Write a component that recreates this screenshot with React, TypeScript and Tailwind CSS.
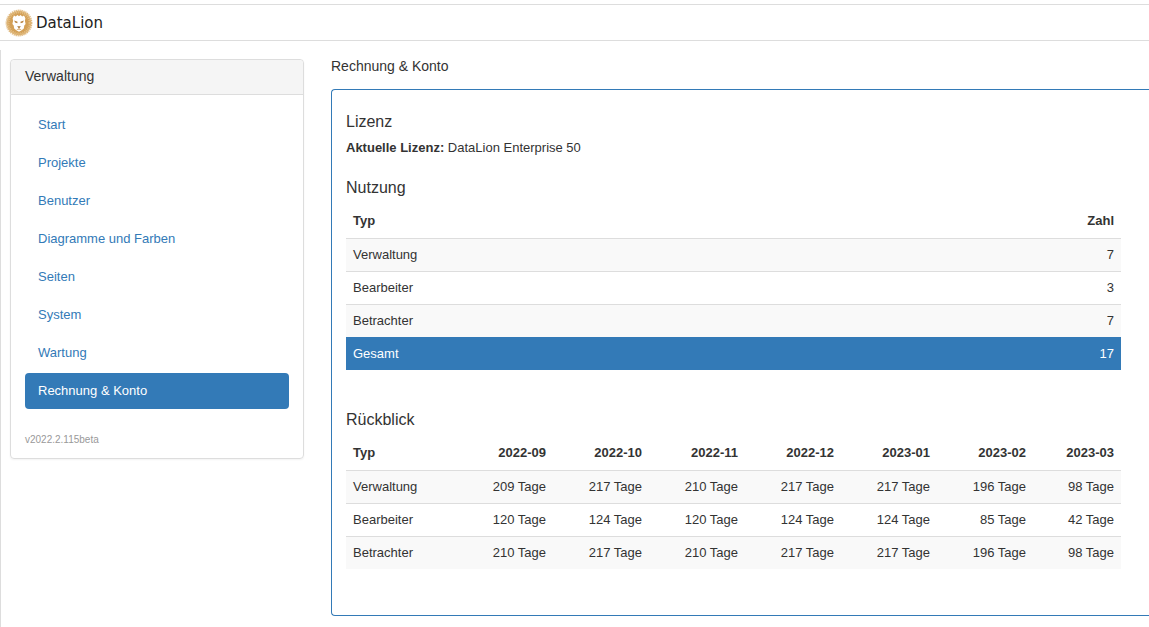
import clsx from 'clsx'

const NAV_ITEMS = [
  'Start',
  'Projekte',
  'Benutzer',
  'Diagramme und Farben',
  'Seiten',
  'System',
  'Wartung',
  'Rechnung & Konto',
]

const USAGE = [
  { type: 'Verwaltung', count: 7 },
  { type: 'Bearbeiter', count: 3 },
  { type: 'Betrachter', count: 7 },
]

const MONTHS = ['2022-09', '2022-10', '2022-11', '2022-12', '2023-01', '2023-02', '2023-03']

const HISTORY = [
  { type: 'Verwaltung', days: [209, 217, 210, 217, 217, 196, 98] },
  { type: 'Bearbeiter', days: [120, 124, 120, 124, 124, 85, 42] },
  { type: 'Betrachter', days: [210, 217, 210, 217, 217, 196, 98] },
]

const cell = 'px-[7px] py-[7px]'
const headCell = 'px-[7px] pt-[7px] pb-2'
const row = 'border-t border-[#ddd] odd:bg-[#f9f9f9]'

function LionLogo() {
  return (
    <svg viewBox="0 0 28 28" className="size-7" aria-hidden="true">
      <circle cx="14" cy="14" r="12.2" fill="#dcb06e" />
      <circle cx="14" cy="14" r="12.7" fill="none" stroke="#dfb87e" strokeWidth="1.4" strokeDasharray="1.3 0.7" />
      <circle cx="14" cy="14" r="10.6" fill="#d3a057" />
      <circle cx="14" cy="14" r="10.4" fill="none" stroke="#e6c693" strokeWidth="2" strokeDasharray="0.6 1.4" />
      <path
        d="M7.6 9.2 9 6.6l1.8.9L12.4 6l1.6 1.3L15.6 6l1.6 1.5 1.8-.9 1.4 2.6-.5 2.6.7 3.2-1.3 1.6-.5 3-2.1 1.6L14 22.8l-2.7-1.6-2.1-1.6-.5-3-1.3-1.6.7-3.2z"
        fill="#fff"
      />
      <path d="m9.2 11.6 3.4 1.2-.3 1.4-2.3-.7zM18.8 11.6l-3.4 1.2.3 1.4 2.3-.7z" fill="#b98543" />
      <path d="M12.1 17.2h3.8L14 19.4z" fill="#a87838" />
      <path d="M14 19v1.4m-2.2.2L14 20.2l2.2.4" fill="none" stroke="#cf9a50" strokeWidth=".7" />
    </svg>
  )
}

function Sidebar() {
  return (
    <aside className="w-[294px] shrink-0 self-start rounded border border-[#ddd] shadow-xs">
      <h2 className="rounded-t border-b border-[#ddd] bg-[#f5f5f5] px-[14px] pt-[6px] pb-2 text-sm leading-5">
        Verwaltung
      </h2>
      <div className="px-[14px] pt-3 pb-[10px]">
        <nav className="flex flex-col gap-[2px]">
          {NAV_ITEMS.map(item => (
            <a
              key={item}
              href="#"
              className={clsx(
                'rounded px-[13px] py-2 leading-5',
                item === 'Rechnung & Konto' ? 'bg-[#337ab7] text-white' : 'text-[#337ab7]',
              )}
            >
              {item}
            </a>
          ))}
        </nav>
        <p className="mt-[23px] text-[10px] leading-4 text-[#999]">v2022.2.115beta</p>
      </div>
    </aside>
  )
}

function UsageTable() {
  return (
    <table className="w-full">
      <thead>
        <tr>
          <th className={clsx(headCell, 'text-left')}>Typ</th>
          <th className={clsx(headCell, 'text-right')}>Zahl</th>
        </tr>
      </thead>
      <tbody>
        {USAGE.map(({ type, count }) => (
          <tr key={type} className={row}>
            <td className={cell}>{type}</td>
            <td className={clsx(cell, 'text-right')}>{count}</td>
          </tr>
        ))}
      </tbody>
      <tfoot>
        <tr className="border-t border-[#337ab7] bg-[#337ab7] text-white">
          <td className={cell}>Gesamt</td>
          <td className={clsx(cell, 'text-right')}>17</td>
        </tr>
      </tfoot>
    </table>
  )
}

function HistoryTable() {
  return (
    <table className="w-full">
      <thead>
        <tr>
          <th className={clsx(headCell, 'text-left')}>Typ</th>
          {MONTHS.map(month => (
            <th key={month} className={clsx(headCell, 'w-24 text-right last:w-[88px]')}>
              {month}
            </th>
          ))}
        </tr>
      </thead>
      <tbody>
        {HISTORY.map(({ type, days }) => (
          <tr key={type} className={row}>
            <td className={cell}>{type}</td>
            {days.map((d, i) => (
              <td key={MONTHS[i]} className={clsx(cell, 'text-right')}>
                {d} Tage
              </td>
            ))}
          </tr>
        ))}
      </tbody>
    </table>
  )
}

export default function App() {
  return (
    <div className="flex min-h-screen flex-col bg-white pt-1 font-['Liberation_Sans',Arial,sans-serif] text-[13px] leading-[18px] text-[#333]">
      <header className="flex h-[37px] items-center gap-[3px] border-y border-[#ddd] px-[5px]">
        <LionLogo />
        <span className="font-['DejaVu_Sans',sans-serif] text-[15px] leading-5 text-[#222]">DataLion</span>
      </header>

      <div className="mt-[9px] flex flex-1 gap-[27px] border-l border-[#ddd] pt-[9px] pl-[9px]">
        <Sidebar />
        <main className="min-w-0 flex-1">
          <h1 className="text-sm leading-[14px]">Rechnung &amp; Konto</h1>
          <div className="mt-4 rounded-l border border-r-0 border-[#337ab7] pt-5 pr-7 pb-[46px] pl-[14px]">
            <section>
              <h2 className="mb-[5px] text-base leading-6">Lizenz</h2>
              <p>
                <b>Aktuelle Lizenz:</b> DataLion Enterprise 50
              </p>
            </section>
            <section className="mt-[19px]">
              <h2 className="mb-[5px] text-base leading-6">Nutzung</h2>
              <UsageTable />
            </section>
            <section className="mt-[38px]">
              <h2 className="mb-[5px] text-base leading-6">Rückblick</h2>
              <HistoryTable />
            </section>
          </div>
        </main>
      </div>
    </div>
  )
}
